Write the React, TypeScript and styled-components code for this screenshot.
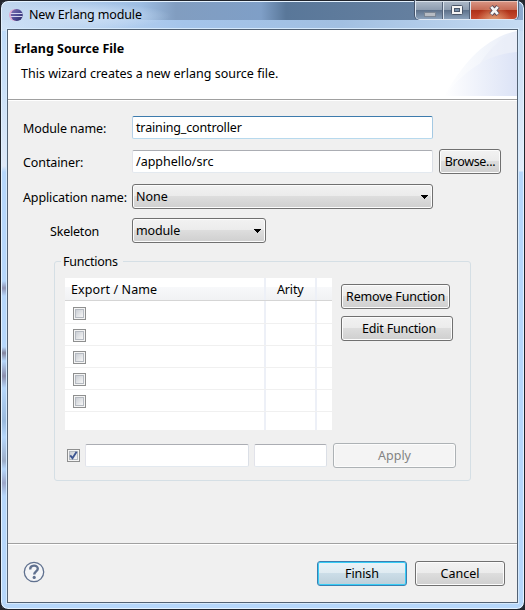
import React from "react";
import styled, { createGlobalStyle, css } from "styled-components";

const GlobalStyle = createGlobalStyle`
  * { box-sizing: border-box; }
  body {
    margin: 0;
    overflow: hidden;
    background: #23262e;
    font-family: "Noto Sans", "Open Sans", sans-serif;
    font-size: 12.5px;
    color: #000;
  }
`;

const Frame = styled.div`
  width: 525px;
  height: 610px;
  padding: 0 6px 6px;
  display: flex;
  flex-direction: column;
  border: 1px solid #20242c;
  border-radius: 8px;
  box-shadow: inset 0 0 0 1px #e4f2ff;
  background:
    radial-gradient(ellipse 100px 14px at 70px 15px, #c8dcf3 30%, transparent) 0 0 / 100% 28px no-repeat,
    linear-gradient(90deg, #c3d8ef 0, #a9c6e8 90px, #9dbde2 140px, #819dc0 175px, #7f9fc7 260px, #597799 285px, #647f9f 410px, #8eabd0 525px) 0 0 / 100% 19px no-repeat,
    linear-gradient(90deg, #cfe2f7, #a4c4ea 35%, #a1bfe1 65%, #c5dbf3) 0 19px / 100% 11px no-repeat,
    linear-gradient(180deg, #b9d8fa 0, #c9e0f8 80px, #dfe9f7 165px, #b6d7fb 171px, #b6d7fb 280px, #8f95b5 287px, #b6d7fb 295px, #b6d7fb 346px, #82839d 352px, #b6d7fb 360px, #8c8fae 375px, #b6d7fb 387px, #9ab9dc 420px, #b6d7fb 436px, #9cadc8 460px, #b6d7fb 468px, #9ca7c9 482px, #b6d7fb 495px) 0 0 / 7px 100% no-repeat,
    linear-gradient(180deg, #c5dbf3 0, #e2edfa 170px, #b6d7fb 171px);
`;

const TitleBar = styled.header`
  height: 28px;
  flex: none;
  display: flex;
  align-items: flex-start;
  padding-left: 2px;
`;

const AppIcon = styled.svg`
  width: 14px;
  height: 14px;
  margin: 7px 6px 0 0;
  flex: none;
`;

const WindowButtons = styled.div`
  display: flex;
  width: 103px;
  height: 20px;
  margin: -1px 0 0 auto;
  border: 1px solid #e0e9f4;
  border-top-color: #272e38;
  border-radius: 0 0 5px 5px;
  overflow: hidden;
  box-shadow: -1px 0 0 #44536a, 1px 0 0 #52677f;
`;

const WindowButton = styled.div<{ $w: number; $danger?: boolean }>`
  width: ${(p) => p.$w}px;
  flex: none;
  display: flex;
  align-items: center;
  justify-content: center;
  border-right: 1px solid #dbe4ee;
  box-shadow: inset 0 1px #d9e1ea, inset -1px 0 #536278;
  background: linear-gradient(#aebac9 0, #8e9db0 48%, #5c7089 50%, #8ba1ba 100%);
  ${(p) =>
    p.$danger &&
    css`
      border: 0;
      box-shadow: inset 0 1px #eabdb0;
      background: radial-gradient(ellipse at 50% 115%, #e2a77d 0, transparent 55%),
        linear-gradient(#d99786 0, #c66b55 48%, #ad3017 50%, #c84b2f 100%);
    `}
`;

const Client = styled.main`
  flex: 1;
  display: flex;
  flex-direction: column;
  border: 1px solid #536274;
  background: #f0f0f0;
  box-shadow: 0 0 0 1px #d5e9fc;
`;

const Banner = styled.section`
  height: 70px;
  flex: none;
  display: flex;
  justify-content: space-between;
  background: #fff;
  border-bottom: 1px solid #a0a0a0;
`;

const BannerText = styled.div`
  display: flex;
  flex-direction: column;
  padding: 10px 0 0 6px;
`;

const BannerArt = styled.svg`
  width: 76px;
  height: 66px;
`;

const Label = styled.span<{ $w?: number; $ls?: number; $indent?: number; $bold?: boolean; $top?: number }>`
  flex: none;
  width: ${(p) => (p.$w ? `${p.$w}px` : "auto")};
  margin-top: ${(p) => p.$top ?? 0}px;
  padding-left: ${(p) => p.$indent ?? 0}px;
  letter-spacing: ${(p) => p.$ls ?? 0}px;
  font-weight: ${(p) => (p.$bold ? 700 : 400)};
  line-height: 18px;
  white-space: nowrap;
`;

const Body = styled.section`
  height: 444px;
  flex: none;
  border-top: 1px solid #fff;
  border-bottom: 1px solid #a0a0a0;
  padding: 15px 0 0 15px;
`;

const Row = styled.div<{ $h: number; $gap: number }>`
  display: flex;
  align-items: center;
  height: ${(p) => p.$h}px;
  margin-bottom: ${(p) => p.$gap}px;
`;

const Field = styled.div<{ $w: number; $focus?: boolean; $ls?: number }>`
  width: ${(p) => p.$w}px;
  height: 23px;
  flex: none;
  padding-left: 3px;
  line-height: 22px;
  letter-spacing: ${(p) => p.$ls ?? 0}px;
  white-space: nowrap;
  background: #fff;
  border: 1px solid;
  border-radius: 2px;
  border-color: ${(p) => (p.$focus ? "#3d7bad #a4c9e3 #b7d9ed #b5cfe7" : "#abadb3 #dbdfe6 #e3e9ef #e2e3ea")};
`;

const buttonTones = {
  normal: css`
    border-color: #707070;
    box-shadow: inset 0 0 0 1px #fcfcfc;
    background: linear-gradient(#f2f2f2 0, #ebebeb 49%, #dddddd 50%, #cfcfcf 100%);
  `,
  primary: css`
    border-color: #3c7fb1;
    box-shadow: inset 0 0 0 1px #37cdf6;
    background: linear-gradient(#eaf3f8 0, #dfebf1 49%, #cbdde7 50%, #bccfda 100%);
  `,
  disabled: css`
    border-color: #adb2b5;
    box-shadow: inset 0 0 0 1px #fcfcfc;
    background: #f4f4f4;
    color: #838383;
  `,
};

const Button = styled.button<{ $w: number; $tone?: keyof typeof buttonTones; $ls?: number; $shift?: number }>`
  width: ${(p) => p.$w}px;
  height: 25px;
  flex: none;
  padding: 1px 0 0 ${(p) => p.$shift ?? 0}px;
  font: inherit;
  line-height: 18px;
  letter-spacing: ${(p) => p.$ls ?? 0}px;
  color: #000;
  white-space: nowrap;
  border: 1px solid;
  border-radius: 3px;
  ${(p) => buttonTones[p.$tone ?? "normal"]}
`;

const Combo = styled.div<{ $w: number; $ls?: number }>`
  width: ${(p) => p.$w}px;
  height: 25px;
  flex: none;
  display: flex;
  align-items: center;
  justify-content: space-between;
  line-height: 18px;
  padding: 1px 4px 0 3px;
  letter-spacing: ${(p) => p.$ls ?? 0}px;
  border: 1px solid;
  border-radius: 3px;
  ${buttonTones.normal}
`;

const Group = styled.fieldset`
  width: 417px;
  height: 229px;
  margin: 9px 0 0 31px;
  padding: 0 0 0 10px;
  border: 1px solid #d5dfe5;
  border-radius: 3px;
  min-width: 0;
`;

const Legend = styled.legend`
  margin-left: -4px;
  padding: 1px 5px 0 2px;
  height: 18px;
  line-height: 18px;
  letter-spacing: -0.25px;
`;

const GroupTop = styled.div`
  display: flex;
  gap: 9px;
  margin-top: 8px;
`;

const Table = styled.div`
  width: 267px;
  height: 152px;
  display: grid;
  grid-template-rows: 23px 23px repeat(4, 22px) 18px;
  background: #fff;
  overflow: hidden;
`;

const TableRow = styled.div<{ $head?: boolean }>`
  display: grid;
  grid-template-columns: 201px 51px 15px;
  border-bottom: 1px solid ${(p) => (p.$head ? "#d5d5d5" : "#f0f0f0")};
  background: ${(p) => (p.$head ? "linear-gradient(#fff 0, #fff 40%, #f7f8fa 42%, #f1f2f4 100%)" : "#fff")};

  &:last-child { border-bottom: 0; }
`;

const Cell = styled.div<{ $indent?: number; $ls?: number }>`
  padding: 2px 0 0 ${(p) => p.$indent ?? 0}px;
  letter-spacing: ${(p) => p.$ls ?? 0}px;
  line-height: 18px;
  display: flex;
  align-items: center;
  border-right: 2px solid #edf0f7;
  white-space: nowrap;

  &:last-child { border-right: 0; }
`;

const Stack = styled.div`
  display: flex;
  flex-direction: column;
  gap: 7px;
  padding-top: 6px;
`;

const Apply = styled.div`
  display: flex;
  align-items: center;
  margin: 13px 0 0 2px;
`;

const Gap = styled.span<{ $w: number }>`
  width: ${(p) => p.$w}px;
  flex: none;
`;

const Box = styled.span`
  width: 13px;
  height: 13px;
  flex: none;
  display: block;
  border: 1px solid #8e8f8f;
  padding: 1px;
  background: #f4f4f4;

  & > svg {
    display: block;
    width: 9px;
    height: 9px;
    border: 1px solid #b5bac1;
    background: linear-gradient(135deg, #cbcfd5, #f6f6f6);
    overflow: visible;
  }
`;

const Footer = styled.footer`
  flex: 1;
  display: flex;
  border-top: 1px solid #fff;
  padding: 16px 12px 0 15px;
`;

const Actions = styled.div`
  display: flex;
  gap: 8px;
  margin-left: auto;
`;

const Check = ({ on }: { on?: boolean }) => (
  <Box>
    <svg viewBox="0 0 7 7">
      {on && <path d="M.2 3.4 2.5 6.2 6.6-.2" fill="none" stroke="#3d5591" strokeWidth="1.9" />}
    </svg>
  </Box>
);

const Arrow = () => (
  <svg width="7" height="4" viewBox="0 0 7 4" shapeRendering="crispEdges">
    <path d="M0 0h7L3.5 4z" fill="#000" />
  </svg>
);

const EclipseLogo = () => (
  <AppIcon viewBox="0 0 14 14">
    <defs>
      <linearGradient id="planet" x1="0" y1="0" x2="1" y2="1">
        <stop offset="0" stopColor="#8375b4" />
        <stop offset=".55" stopColor="#4b4a92" />
        <stop offset="1" stopColor="#292862" />
      </linearGradient>
    </defs>
    <circle cx="6" cy="7" r="6" fill="#dfa9cf" />
    <circle cx="7.8" cy="7" r="6" fill="url(#planet)" />
    <path d="M1.5 5.5h12M1.5 8.5h12" stroke="#d3d4ee" strokeWidth="1" />
  </AppIcon>
);

export default function App() {
  return (
    <>
      <GlobalStyle />
      <Frame>
        <TitleBar>
          <EclipseLogo />
          <Label $top={5} $ls={-0.15}>New Erlang module</Label>
          <WindowButtons>
            <WindowButton $w={28}>
              <svg width="12" height="16" viewBox="0 0 12 16">
                <rect x=".5" y="10.5" width="11" height="4" fill="#b7bcc3" stroke="#7b8694" />
              </svg>
            </WindowButton>
            <WindowButton $w={27}>
              <svg width="12" height="10" viewBox="0 0 12 10">
                <rect x=".5" y=".5" width="11" height="9" rx="1" fill="#f4f4f4" stroke="#4a5669" />
                <rect x="3.5" y="3.5" width="5" height="3" fill="#7890aa" stroke="#4a5669" />
              </svg>
            </WindowButton>
            <WindowButton $w={46} $danger>
              <svg width="13" height="11" viewBox="0 0 13 11">
                <path d="M3 1.5 10 9.5M10 1.5 3 9.5" stroke="#5a4b59" strokeWidth="4.6" />
                <path d="M3.2 1.8 9.8 9.2M9.8 1.8 3.2 9.2" stroke="#f6f6f6" strokeWidth="2.7" />
              </svg>
            </WindowButton>
          </WindowButtons>
        </TitleBar>
        <Client>
          <Banner>
            <BannerText>
              <Label $bold>Erlang Source File</Label>
              <Label $top={7} $indent={7}>This wizard creates a new erlang source file.</Label>
            </BannerText>
            <BannerArt viewBox="0 0 76 66">
              <defs>
                <linearGradient id="sweep" x1="0" x2="1">
                  <stop offset="0" stopColor="#fff" />
                  <stop offset="1" stopColor="#e8edf8" />
                </linearGradient>
                <linearGradient id="swell" x1="0" x2="1">
                  <stop offset="0" stopColor="#fff" />
                  <stop offset="1" stopColor="#dce3f6" />
                </linearGradient>
              </defs>
              <path d="M3 66C22 34 43 8 76 1V66Z" fill="url(#sweep)" />
              <path d="M38 35C48 20 58 8 76 1V66H38Z" fill="#e9edf8" opacity=".55" />
              <path d="M3 66C22 43 44 24 76 22V66Z" fill="url(#swell)" />
            </BannerArt>
          </Banner>
          <Body>
            <Row $h={23} $gap={11}>
              <Label $w={109} $top={2} $ls={-0.12}>Module name:</Label>
              <Field $w={301} $focus $ls={-0.15}>training_controller</Field>
            </Row>
            <Row $h={23} $gap={11}>
              <Label $w={109} $top={2} $ls={-0.1}>Container:</Label>
              <Field $w={301}>/apphello/src</Field>
              <Gap $w={6} />
              <Button $w={62} $ls={-0.3}>Browse...</Button>
            </Row>
            <Row $h={25} $gap={9}>
              <Label $w={109} $top={2} $ls={-0.12}>Application name:</Label>
              <Combo $w={301}>None<Arrow /></Combo>
            </Row>
            <Row $h={25} $gap={0}>
              <Label $w={109} $top={2} $indent={27} $ls={-0.2}>Skeleton</Label>
              <Combo $w={134} $ls={-0.15}>module<Arrow /></Combo>
            </Row>
            <Group>
              <Legend>Functions</Legend>
              <GroupTop>
                <Table>
                  <TableRow $head>
                    <Cell $indent={6} $ls={0.1}>Export / Name</Cell>
                    <Cell $indent={11} $ls={-0.15}>Arity</Cell>
                    <Cell />
                  </TableRow>
                  {[0, 1, 2, 3, 4, 5].map((i) => (
                    <TableRow key={i}>
                      <Cell $indent={8}>{i < 5 && <Check />}</Cell>
                      <Cell />
                      <Cell />
                    </TableRow>
                  ))}
                </Table>
                <Stack>
                  <Button $w={109} $ls={-0.17}>Remove Function</Button>
                  <Button $w={112} $shift={4} $ls={-0.2}>Edit Function</Button>
                </Stack>
              </GroupTop>
              <Apply>
                <Check on />
                <Gap $w={5} />
                <Field $w={164} />
                <Gap $w={5} />
                <Field $w={73} />
                <Gap $w={6} />
                <Button $w={123} $tone="disabled">Apply</Button>
              </Apply>
            </Group>
          </Body>
          <Footer>
            <svg width="22" height="22" viewBox="0 0 22 22">
              <circle cx="11" cy="11" r="9.7" fill="#f4f5f7" stroke="#60718f" strokeWidth="1.3" />
              <path d="M7.2 8.4C7.2 3.6 14.8 3.5 14.8 7.7 14.8 10.4 11.2 10.3 11.2 13.5" fill="none" stroke="#60718f" strokeWidth="2.4" />
              <circle cx="11.2" cy="16.4" r="1.6" fill="#60718f" />
            </svg>
            <Actions>
              <Button $w={90} $tone="primary" $ls={-0.1}>Finish</Button>
              <Button $w={90}>Cancel</Button>
            </Actions>
          </Footer>
        </Client>
      </Frame>
    </>
  );
}
